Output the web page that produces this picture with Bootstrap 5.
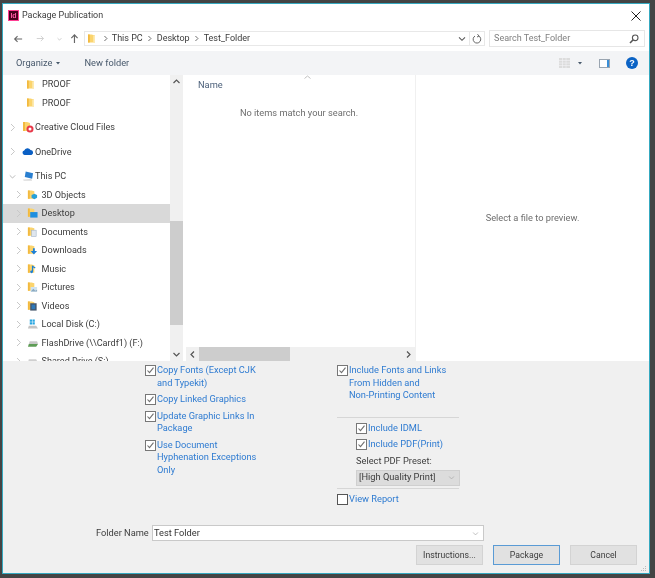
<!DOCTYPE html>
<html lang="en"><head><meta charset="utf-8"><title>Package Publication</title>
<link href="https://cdn.jsdelivr.net/npm/bootstrap@5.3.0/dist/css/bootstrap.min.css" rel="stylesheet">
<style>
html,body{height:100%;margin:0}
body{background:#444;font-family:Roboto,"Noto Sans","Liberation Sans",sans-serif;font-size:9.25px;line-height:12.5px;color:#3c3c3c;overflow:hidden;padding:3px 5px 4px 2px}
.dlg{height:100%;border:1px solid #35a9c0;background:#fff;position:relative;filter:blur(.3px)}
.ttl{height:23px;padding-left:5px}
.ttxt{font-size:8.95px}
.idlogo{width:11px;height:11px;background:#49021f;border:1px solid #ff3f94;color:#ff5aa5;font:bold 7px/9px "Liberation Sans",sans-serif;text-align:center;margin-right:3px}
.adr{height:24px;padding:0 4px 1px 10px}
.crumb{height:15px;width:389px;border:1px solid #e8e8e8;margin-left:5px;padding:0 3px 0 3px;font-size:9px}
.sep{margin:0 4.500px}
.refresh{height:15px;width:15px;border:1px solid #e8e8e8;border-left:0}
.srch{width:157px;height:17px;border:1px solid #e6e6e6;margin-left:4px;padding:0 5px 0 4px;color:#808080;font-size:9px}
.navf{margin-left:13px}.navd{margin-left:12px}.navu{margin-left:8px}
.tbar{height:24px;background:#f3f4f6;padding:0 11px 0 13px;color:#47586b}
.nfold{margin-left:24px}.vcaret{margin-left:8px}.vpane{margin-left:17px}.vhelp{margin-left:16px}
.main{height:286px;overflow:hidden}
.tree{width:167px;height:286px;overflow:hidden;flex:none;font-size:9.1px}
.trow{height:18.5px;line-height:18.5px;white-space:nowrap}
.gapt{margin-top:6px}
.trow.sel{background:#d9d9d9}
.i1{padding-left:6px}.i2{padding-left:12px}.i3{padding-left:24px}
.chev{width:7px;flex:none;margin-right:3px}
.ic1{margin:0 1px 0 3px}.ic2{margin:0 3.500px 0 2px}
.vbar{width:13px;background:#f0f0f0;flex:none;height:286px}
.vthumb{background:#cdcdcd;height:104px;margin-top:146px}
.lst{width:233px;flex:none;border-right:1px solid #f0f0f0;height:286px}
.lhead{height:24px;padding:4px 0 0 15px;color:#4c607a;position:relative}
.sortc{position:absolute;left:121px;top:0}
.empty{margin-top:8px;text-align:center;color:#6d6d6d}
.hbar{height:14px;margin:0 0 0 3px;background:#f0f0f0;align-items:center}
.hthumb{width:91px;height:14px;background:#cdcdcd;margin-left:4px}
.prev{color:#6d6d6d}
.lower{height:212px;background:#f0f0f0;position:relative}
.cols{padding:3px 0 0 142px;height:164px}
.cola{width:192px;flex:none}.colb{width:122px;flex:none}
.ck{display:flex;margin-bottom:4px;color:#2e7bd1;gap:1px}
.ck svg{flex:none;margin-top:1px}
.rule{border-top:1px solid #d6d6d6}
.rtop{margin-top:15px}
.sub{padding-left:19px}
.ddn{height:16px;background:#dcdcdc;border:1px solid #cfcfcf;margin:2px 0 0 19px;padding:0 4px 0 2px;width:104px;color:#3c3c3c}
.plain{margin:0 0 0 19px;height:13px}
.fold{padding-left:93px;height:16px}
.ftxt{margin-right:3px;width:53px}
.fin{width:332px;height:16px;background:#fff;border:1px solid #c9c9c9;padding:0 4px 0 1px;color:#333}
.btnsr{gap:10px;padding:4px 0 0 413px}
.wbtn{width:67px;height:20px;background:#e1e1e1;border:1px solid #d3d3d3;border-radius:0;padding:0;font-size:8.7px;line-height:17px;color:#3c3c3c}
.wbtn.def{border-color:#5a9bd5}
.grip{position:absolute;right:2px;bottom:1px}
.gp4{margin-top:4px}.gp2{margin-top:2px}
.vsb1{left:3px;top:4px}.vsb2{left:3px;bottom:4px}
</style></head>
<body>
<svg width="0" height="0" class="d-block position-absolute">
<symbol id="fld" viewBox="0 0 8 11"><path d="M0 1h4l4 1v8H0z" fill="#fbd46d"/><path d="M0 1h2v9H0z" fill="#f2b93f"/><path d="M6 2h2v8H6z" fill="#fdeab0"/></symbol>
<symbol id="cv" viewBox="0 0 7 9"><path d="M2 1l3.500 3.500L2 8" fill="none" stroke="#c8c8c8" stroke-width="1"/></symbol>
<symbol id="cvd" viewBox="0 0 7 9"><path d="M2 1l3.500 3.500L2 8" fill="none" stroke="#555" stroke-width="1.200"/></symbol>
<symbol id="cd" viewBox="0 0 9 7"><path d="M1 2l3.500 3.500L8 2" fill="none" stroke="#a8a8a8" stroke-width="1"/></symbol>
<symbol id="on" viewBox="0 0 11 11"><rect x=".5" y=".5" width="10" height="10" fill="#fff" stroke="#777"/><path d="M2.500 5.500l2 2.200 4-5" fill="none" stroke="#707070" stroke-width="1.100"/></symbol>
<symbol id="off" viewBox="0 0 11 11"><rect x=".5" y=".5" width="10" height="10" fill="#fff" stroke="#555"/></symbol>
<symbol id="base" viewBox="0 0 12 12"><path d="M1 1h4l3 1v8H1z" fill="#fbd46d"/><path d="M1 1h2v9H1z" fill="#f2b93f"/></symbol>
</svg>
<div class="dlg d-flex flex-column">
  <div class="ttl d-flex align-items-center justify-content-between">
    <div class="d-flex align-items-center"><span class="idlogo d-block">Id</span><span class="ttxt">Package Publication</span></div>
    <svg class="me-2" width="10" height="10" viewBox="0 0 10 10"><path d="M.5.5l9 9M9.500.5l-9 9" stroke="#222" stroke-width="1"/></svg>
  </div>
  <div class="adr d-flex align-items-center">
    <svg width="10" height="10" viewBox="0 0 12 10"><path d="M11 5H2M5.500 1.500L2 5l3.500 3.500" fill="none" stroke="#666" stroke-width="1.300"/></svg>
    <svg class="navf" width="9" height="9" viewBox="0 0 12 10"><path d="M1 5h9M6.500 1.500L10 5 6.500 8.500" fill="none" stroke="#ccc" stroke-width="1.200"/></svg>
    <svg class="navd" width="5" height="4" viewBox="0 0 9 7"><use href="#cd"/></svg>
    <svg class="navu" width="9" height="11" viewBox="0 0 10 12"><path d="M5 11V2M1.500 5.500L5 2l3.500 3.500" fill="none" stroke="#666" stroke-width="1.300"/></svg>
    <div class="crumb d-flex align-items-center">
      <svg width="7" height="11"><use href="#fld"/></svg>
      <svg class="ms-2 me-1" width="5" height="7"><use href="#cvd"/></svg><span>This PC</span>
      <svg class="sep" width="5" height="7"><use href="#cvd"/></svg><span>Desktop</span>
      <svg class="sep" width="5" height="7"><use href="#cvd"/></svg><span>Test_Folder</span>
      <svg class="ms-auto" width="8" height="6" viewBox="0 0 9 7"><path d="M1 1.500l3.500 3.500L8 1.500" fill="none" stroke="#555" stroke-width="1.200"/></svg>
    </div>
    <div class="refresh d-flex align-items-center justify-content-center"><svg width="10" height="10" viewBox="0 0 10 10"><path d="M3 2a3.800 3.800 0 1 0 3.500-.2M5.500 .2L7 2 5 3" fill="none" stroke="#666" stroke-width="1"/></svg></div>
    <div class="srch d-flex align-items-center justify-content-between"><span>Search Test_Folder</span><svg width="10" height="10" viewBox="0 0 10 10"><circle cx="6.200" cy="3.800" r="2.800" fill="none" stroke="#555" stroke-width="1.100"/><path d="M4.200 5.800L1 9" stroke="#555" stroke-width="1.600"/></svg></div>
  </div>
  <div class="tbar d-flex align-items-center">
    <span>Organize</span><svg class="ms-1" width="4" height="3"><path d="M0 0h4L2 2.500z" fill="#47586b"/></svg>
    <span class="nfold">New folder</span>
    <svg class="ms-auto" width="11" height="10" viewBox="0 0 11 10"><path d="M0 0h11v10H0z" fill="#dcdcdc"/><path d="M3.500 0v10M7 0v10M0 2.500h11M0 5h11M0 7.500h11" stroke="#f3f4f6" stroke-width=".6"/></svg>
    <svg class="vcaret" width="4" height="3"><path d="M0 0h4L2 2.500z" fill="#47586b"/></svg>
    <svg class="vpane" width="11" height="9" viewBox="0 0 11 9"><rect x=".5" y=".5" width="10" height="8" fill="#fff" stroke="#9aa5b1"/><rect x="8" y="1" width="2" height="7" fill="#3a8fd8"/></svg>
    <svg class="vhelp" width="12" height="12" viewBox="0 0 12 12"><circle cx="6" cy="6" r="6" fill="#0b63c5"/><text x="6" y="9" text-anchor="middle" font-family="Liberation Sans" font-weight="bold" font-size="9" fill="#fff">?</text></svg>
  </div>
  <div class="main d-flex">
    <div class="tree">
      <div class="trow i3 d-flex align-items-center"><svg class="me-2" width="7" height="11"><use href="#fld"/></svg>PROOF</div>
      <div class="trow i3 d-flex align-items-center"><svg class="me-2" width="7" height="11"><use href="#fld"/></svg>PROOF</div>
      <div class="trow gapt i1 d-flex align-items-center"><svg class="chev" height="9"><use href="#cv"/></svg><svg class="ic1" width="12" height="12" viewBox="0 0 12 12"><use href="#base"/><circle cx="8" cy="8" r="3.500" fill="#e8394a"/><circle cx="8" cy="8" r="1.500" fill="#fff"/></svg>Creative Cloud Files</div>
      <div class="trow gapt i1 d-flex align-items-center"><svg class="chev" height="9"><use href="#cv"/></svg><svg class="ic1" width="12" height="9" viewBox="0 0 12 9"><path d="M2.500 8a2.300 2.300 0 0 1-.3-4.500A3.500 3.500 0 0 1 8.500 3a2.600 2.600 0 0 1 1 5z" fill="#0a5fc4"/></svg>OneDrive</div>
      <div class="trow gapt i1 d-flex align-items-center"><svg class="chev" height="9" viewBox="0 0 9 7"><use href="#cd"/></svg><svg class="ic1" width="12" height="12" viewBox="0 0 13 12"><path d="M4 1l8 2-1 6-8-2z" fill="#2a7fd0"/><path d="M1 10l9-.5 1 1.500H2z" fill="#c9c9c9"/></svg>This PC</div>
      <div class="trow i2 d-flex align-items-center"><svg class="chev" height="9"><use href="#cv"/></svg><svg class="ic2" width="11" height="12" viewBox="0 0 12 12"><use href="#base"/><path d="M5 6l3-1.500L11 6v3l-3 1.500L5 9z" fill="#27a0d8"/></svg>3D Objects</div>
      <div class="trow sel i2 d-flex align-items-center"><svg class="chev" height="9"><use href="#cv"/></svg><svg class="ic2" width="11" height="12" viewBox="0 0 12 12"><use href="#base"/><rect x="3.500" y="5" width="8" height="6" fill="#1e8fe0"/></svg>Desktop</div>
      <div class="trow i2 d-flex align-items-center"><svg class="chev" height="9"><use href="#cv"/></svg><svg class="ic2" width="11" height="12" viewBox="0 0 12 12"><use href="#base"/><rect x="5" y="4" width="5" height="7" fill="#dfe6ee" stroke="#9fb2c6" stroke-width=".6"/></svg>Documents</div>
      <div class="trow i2 d-flex align-items-center"><svg class="chev" height="9"><use href="#cv"/></svg><svg class="ic2" width="11" height="12" viewBox="0 0 12 12"><use href="#base"/><path d="M6.500 4h2v3H11L7.500 11 4 7h2.500z" fill="#1c7fd6"/></svg>Downloads</div>
      <div class="trow i2 d-flex align-items-center"><svg class="chev" height="9"><use href="#cv"/></svg><svg class="ic2" width="11" height="12" viewBox="0 0 12 12"><use href="#base"/><path d="M6 9V3l3 2" fill="none" stroke="#1c7fd6" stroke-width="1.300"/><circle cx="5" cy="9" r="1.500" fill="#1c7fd6"/></svg>Music</div>
      <div class="trow i2 d-flex align-items-center"><svg class="chev" height="9"><use href="#cv"/></svg><svg class="ic2" width="11" height="12" viewBox="0 0 12 12"><use href="#base"/><rect x="4" y="6" width="7" height="5" fill="#cfe3f2"/><path d="M4 11l3-3 2 2 2-1v2z" fill="#8aa9c0"/></svg>Pictures</div>
      <div class="trow i2 d-flex align-items-center"><svg class="chev" height="9"><use href="#cv"/></svg><svg class="ic2" width="11" height="12" viewBox="0 0 12 12"><use href="#base"/><rect x="3.500" y="3" width="7" height="8" fill="#45566b"/><rect x="5" y="4.500" width="4" height="5" fill="#2f79b8"/></svg>Videos</div>
      <div class="trow i2 d-flex align-items-center"><svg class="chev" height="9"><use href="#cv"/></svg><svg class="ic2" width="11" height="12" viewBox="0 0 12 12"><path d="M3 1h2.500v2.500H3zM6 1h2.500v2.500H6zM3 4h2.500v2.500H3zM6 4h2.500v2.500H6z" fill="#28a5e0"/><path d="M2 8h8l2 3H1z" fill="#c4c4c4"/></svg>Local Disk (C:)</div>
      <div class="trow i2 d-flex align-items-center"><svg class="chev" height="9"><use href="#cv"/></svg><svg class="ic2" width="11" height="12" viewBox="0 0 12 12"><path d="M3 4h8l1 3H2z" fill="#c8c8c8"/><path d="M2 7h10l-2 3H1z" fill="#5e9c56"/></svg>FlashDrive (\\Cardf1) (F:)</div>
      <div class="trow i2 d-flex align-items-center"><svg class="chev" height="9"><use href="#cv"/></svg><svg class="ic2" width="11" height="12" viewBox="0 0 12 12"><path d="M2 4h8l2 4H1z" fill="#cfcfcf"/></svg>Shared Drive (S:)</div>
    </div>
    <div class="vbar d-flex flex-column position-relative">
      <svg class="position-absolute vsb1" width="7" height="5"><path d="M.5 4L3.500 1l3 3" fill="none" stroke="#555" stroke-width="1.200"/></svg>
      <div class="vthumb"></div>
      <svg class="position-absolute vsb2" width="7" height="5"><path d="M.5 1l3 3 3-3" fill="none" stroke="#555" stroke-width="1.200"/></svg>
    </div>
    <div class="lst d-flex flex-column">
      <div class="lhead">Name<svg class="sortc" width="7" height="4"><path d="M.5 3.500L3.500 1l3 2.500" fill="none" stroke="#c0c0c0"/></svg></div>
      <div class="empty flex-grow-1">No items match your search.</div>
      <div class="hbar d-flex">
        <svg class="ms-1" width="5" height="7"><path d="M4 .5L1 3.500l3 3" fill="none" stroke="#555" stroke-width="1.200"/></svg>
        <div class="hthumb"></div>
        <svg class="ms-auto me-1" width="5" height="7"><path d="M1 .5l3 3-3 3" fill="none" stroke="#555" stroke-width="1.200"/></svg>
      </div>
    </div>
    <div class="prev flex-grow-1 d-flex align-items-center justify-content-center">Select a file to preview.</div>
  </div>
  <div class="lower">
    <div class="cols d-flex">
      <div class="cola">
        <div class="ck"><svg width="11" height="11"><use href="#on"/></svg><span>Copy Fonts (Except CJK<br>and Typekit)</span></div>
        <div class="ck"><svg width="11" height="11"><use href="#on"/></svg><span>Copy Linked Graphics</span></div>
        <div class="ck"><svg width="11" height="11"><use href="#on"/></svg><span>Update Graphic Links In<br>Package</span></div>
        <div class="ck"><svg width="11" height="11"><use href="#on"/></svg><span>Use Document<br>Hyphenation Exceptions<br>Only</span></div>
      </div>
      <div class="colb">
        <div class="ck"><svg width="11" height="11"><use href="#on"/></svg><span>Include Fonts and Links<br>From Hidden and<br>Non-Printing Content</span></div>
        <div class="rule rtop"></div>
        <div class="ck sub gp4"><svg width="11" height="11"><use href="#on"/></svg><span>Include IDML</span></div>
        <div class="ck sub"><svg width="11" height="11"><use href="#on"/></svg><span>Include PDF(Print)</span></div>
        <div class="plain">Select PDF Preset:</div>
        <div class="ddn d-flex align-items-center justify-content-between"><span class="text-nowrap">[High Quality Print]</span><svg width="7" height="5" viewBox="0 0 9 7"><use href="#cd"/></svg></div>
        <div class="rule gp2"></div>
        <div class="ck gp4"><svg width="11" height="11"><use href="#off"/></svg><span>View Report</span></div>
      </div>
    </div>
    <div class="fold d-flex align-items-center"><span class="ftxt text-nowrap">Folder Name</span>
      <div class="fin d-flex align-items-center justify-content-between"><span>Test Folder</span><svg width="7" height="5" viewBox="0 0 9 7"><use href="#cd"/></svg></div></div>
    <div class="btnsr d-flex">
      <button class="btn wbtn" type="button">Instructions...</button>
      <button class="btn wbtn def" type="button">Package</button>
      <button class="btn wbtn" type="button">Cancel</button>
    </div>
    <svg class="grip" width="7" height="7" viewBox="0 0 7 7"><path d="M5 1h1v1H5zM3 3h1v1H3zM5 3h1v1H5zM1 5h1v1H1zM3 5h1v1H3zM5 5h1v1H5z" fill="#bbb"/></svg>
  </div>
</div>
<script src="https://cdn.jsdelivr.net/npm/bootstrap@5.3.0/dist/js/bootstrap.bundle.min.js"></script>
</body></html>
